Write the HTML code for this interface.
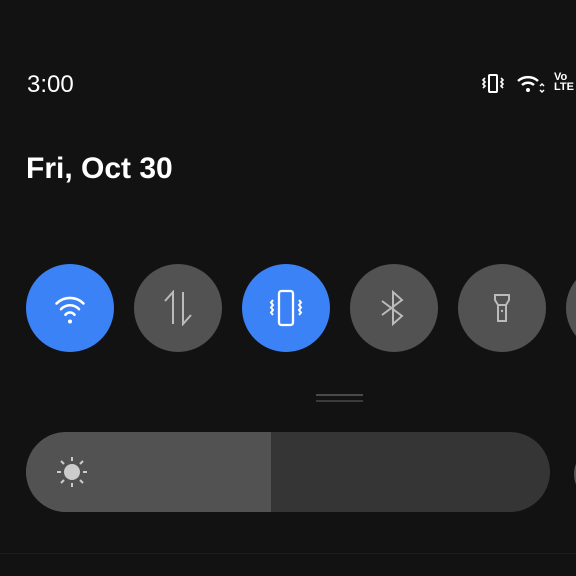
<!DOCTYPE html>
<html><head><style>
body{margin:0;width:576px;height:576px;background:#121212;position:relative;overflow:hidden;font-family:"Liberation Sans",sans-serif;color:#fff}
.c{position:absolute;top:264px;width:88px;height:88px;border-radius:50%;background:#525252}
.b{background:#3b82f6}
svg{position:absolute}
</style></head><body>
<div style="position:absolute;left:27px;top:71px;font-size:24px">3:00</div>
<div style="position:absolute;left:26px;top:152px;font-size:30px;font-weight:bold">Fri, Oct 30</div>
<svg style="left:481px;top:72px" width="24" height="24" viewBox="0 0 24 24" fill="none" stroke="#fff" stroke-width="2"><rect x="8" y="3" width="8" height="17" rx="1"/><path d="M4 6l-2 2 2 2-2 2 2 2-2 2M20 6l2 2-2 2 2 2-2 2 2 2" stroke-width="1.6"/></svg>
<svg style="left:516px;top:72px" width="30" height="24" viewBox="0 0 30 24" fill="none" stroke="#fff" stroke-width="2.5"><path d="M2 9a15 15 0 0 1 20 0M6 13a9 9 0 0 1 12 0"/><circle cx="12" cy="18" r="2" fill="#fff" stroke="none"/><path d="M24 14l2-2 2 2M24 18l2 2 2-2" stroke-width="1.5"/></svg>
<div style="position:absolute;left:554px;top:72px;font-size:11px;font-weight:bold;line-height:10px">Vo<br>LTE</div>
<div class="c b" style="left:26px"></div>
<div class="c" style="left:134px"></div>
<div class="c b" style="left:242px"></div>
<div class="c" style="left:350px"></div>
<div class="c" style="left:458px"></div>
<div class="c" style="left:566px"></div>
<svg style="left:52px;top:290px" width="36" height="36" viewBox="0 0 32 32" fill="none" stroke="#fff" stroke-width="2.3" stroke-linecap="round"><path d="M4 12a17 17 0 0 1 24 0M8 17a11 11 0 0 1 16 0M12 22a5 5 0 0 1 8 0"/><circle cx="16" cy="28" r="1.8" fill="#fff" stroke="none"/></svg>
<svg style="left:160px;top:290px" width="36" height="36" viewBox="0 0 36 36" fill="none" stroke="#bbb" stroke-width="2"><path d="M5 11l8-9v32M31 25l-8 9V2"/></svg>
<svg style="left:266px;top:288px" width="40" height="40" viewBox="0 0 40 40" fill="none" stroke="#fff" stroke-width="2.3"><rect x="13" y="3" width="14" height="34" rx="2.5"/><path d="M7 12l-2 2.5 2 2.5-2 2.5 2 2.5-2 2.5 2 2.5M33 12l2 2.5-2 2.5 2 2.5-2 2.5 2 2.5-2 2.5" stroke-width="2"/></svg>
<svg style="left:376px;top:290px" width="36" height="36" viewBox="0 0 36 36" fill="none" stroke="#bbb" stroke-width="2"><path d="M6 11l20 15-9 8V2l9 8L6 25"/></svg>
<svg style="left:486px;top:292px" width="32" height="32" viewBox="0 0 32 32" fill="none" stroke="#bbb" stroke-width="2"><path d="M9 3h14v5l-3 5H12L9 8zM12 13v16h8V13"/><circle cx="16" cy="19" r="1.2" fill="#bbb" stroke="none"/></svg>
<div style="position:absolute;left:316px;top:394px;width:47px;height:2px;background:#4a4a4a"></div>
<div style="position:absolute;left:316px;top:400px;width:47px;height:2px;background:#3a3a3a"></div>
<div style="position:absolute;left:26px;top:432px;width:524px;height:80px;border-radius:40px;background:#353535;overflow:hidden"><div style="width:245px;height:80px;background:#525252"></div></div>
<svg style="left:56px;top:456px" width="32" height="32" viewBox="0 0 32 32" stroke="#ccc" stroke-width="2"><circle cx="16" cy="16" r="8" fill="#ccc" stroke="none"/><path d="M16 1v4M16 27v4M1 16h4M27 16h4M5 5l3 3M24 24l3 3M27 5l-3 3M5 27l3-3"/></svg>
<div style="position:absolute;left:574px;top:448px;width:48px;height:48px;border-radius:50%;border:2px solid #555"></div>
<div style="position:absolute;left:0;top:553px;width:576px;height:1px;background:#1c1c1c"></div>
</body></html>
